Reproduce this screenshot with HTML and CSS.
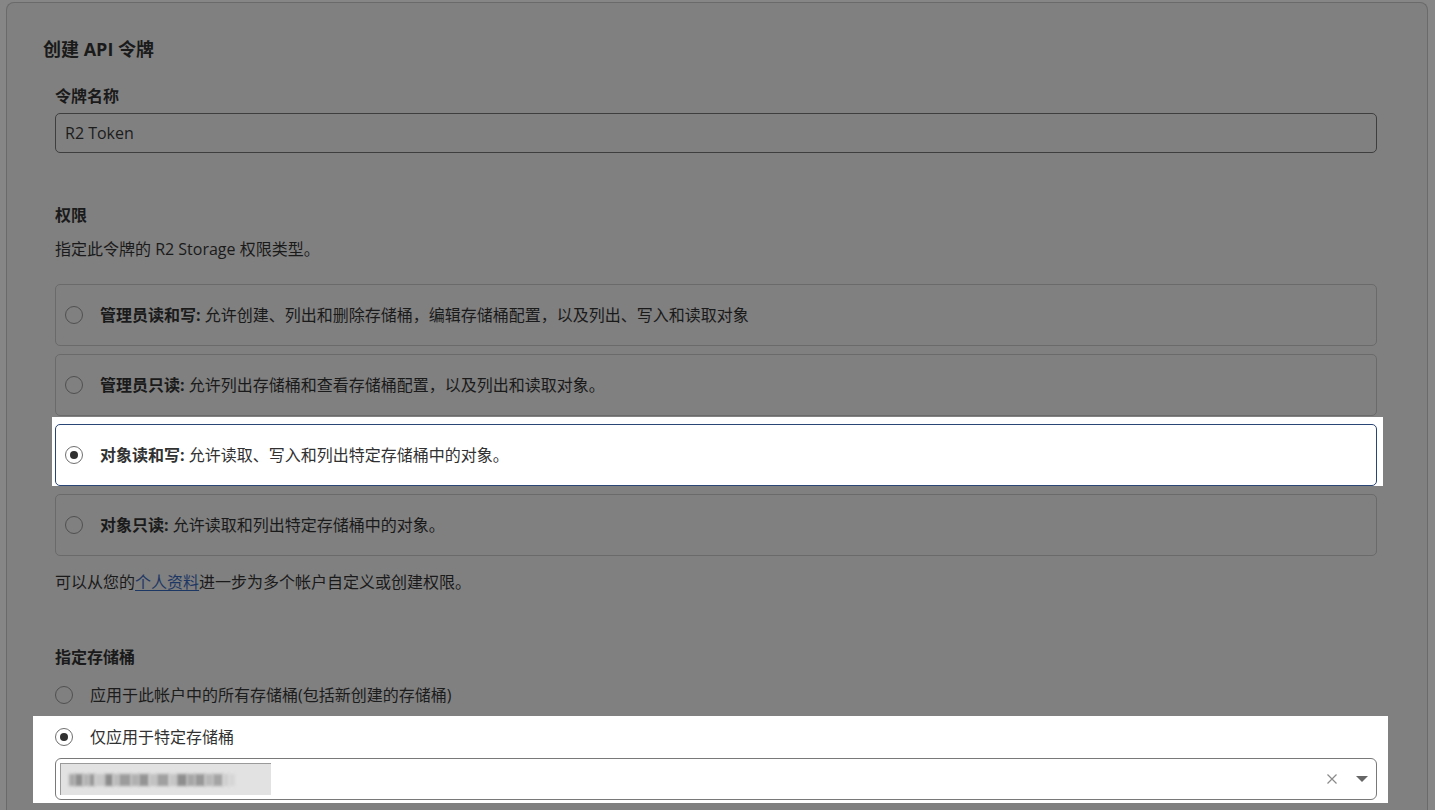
FILE: index.html
```html
<!DOCTYPE html>
<html lang="zh-CN">
<head>
  <meta charset="UTF-8" />
  <title>创建 API 令牌</title>
  <link rel="stylesheet" href="styles.css">
</head>
<body>
  <div class="page">
    <div class="card">
      <h1>创建 API 令牌</h1>

      <!-- Token name -->
      <div class="label">令牌名称</div>
      <div class="input">R2 Token</div>

      <!-- Permissions -->
      <div class="label section">权限</div>
      <p class="desc">指定此令牌的 R2 Storage 权限类型。</p>

      <div class="options">
        <div class="option">
          <span class="radio"></span>
          <span><b>管理员读和写:</b> 允许创建、列出和删除存储桶，编辑存储桶配置，以及列出、写入和读取对象</span>
        </div>
        <div class="option">
          <span class="radio"></span>
          <span><b>管理员只读:</b> 允许列出存储桶和查看存储桶配置，以及列出和读取对象。</span>
        </div>
        <div class="spot spot-option">
          <div class="option selected">
            <span class="radio checked"></span>
            <span><b>对象读和写:</b> 允许读取、写入和列出特定存储桶中的对象。</span>
          </div>
        </div>
        <div class="option">
          <span class="radio"></span>
          <span><b>对象只读:</b> 允许读取和列出特定存储桶中的对象。</span>
        </div>
      </div>

      <p class="note">可以从您的<a href="#">个人资料</a>进一步为多个帐户自定义或创建权限。</p>

      <!-- Buckets -->
      <div class="label section2">指定存储桶</div>
      <div class="choice">
        <span class="radio"></span>
        <span>应用于此帐户中的所有存储桶(包括新创建的存储桶)</span>
      </div>

      <div class="spot spot-bucket">
        <div class="choice">
          <span class="radio checked"></span>
          <span>仅应用于特定存储桶</span>
        </div>
        <div class="select">
          <!-- bucket name is pixelated in the original -->
          <div class="tag">
            <i style="width:6px;background:#a9a9a9"></i>
            <i style="width:8px;background:#8f8f8f"></i>
            <i style="width:6px;background:#b4b4b4"></i>
            <i style="width:6px;background:#9a9a9a"></i>
            <i style="width:10px;background:#c8c8c8"></i>
            <i style="width:8px;background:#8c8c8c"></i>
            <i style="width:6px;background:#bcbcbc"></i>
            <i style="width:12px;background:#9c9c9c"></i>
            <i style="width:8px;background:#b0b0b0"></i>
            <i style="width:10px;background:#949494"></i>
            <i style="width:8px;background:#c2c2c2"></i>
            <i style="width:12px;background:#a0a0a0"></i>
            <i style="width:8px;background:#c6c6c6"></i>
            <i style="width:10px;background:#8e8e8e"></i>
            <i style="width:8px;background:#a6a6a6"></i>
            <i style="width:10px;background:#989898"></i>
            <i style="width:8px;background:#b8b8b8"></i>
            <i style="width:10px;background:#a4a4a4"></i>
            <i style="width:6px;background:#d0d0d0"></i>
            <i style="width:6px;background:#d6d6d6"></i>
          </div>
          <span class="clear">
            <svg width="12" height="12" viewBox="0 0 12 12"><path d="M1.5 1.5 L10.5 10.5 M10.5 1.5 L1.5 10.5" stroke="#8a8a8a" stroke-width="1.2" fill="none"/></svg>
          </span>
          <span class="caret">
            <svg width="12" height="6" viewBox="0 0 12 6"><path d="M0 0 L12 0 L6 6 Z" fill="#666"/></svg>
          </span>
        </div>
      </div>
    </div>
  </div>
</body>
</html>
```

FILE: styles.css
```css
/* Base */
* {
  margin: 0;
  padding: 0;
  box-sizing: border-box;
}

body {
  font-family: "Open Sans", "Noto Sans CJK SC", sans-serif;
  font-size: 16px;
  line-height: 24px;
  color: #1a1a1a;
  background-color: #868686;
  overflow: hidden;
}

.page {
  padding: 2px 7px 0 6px;
  height: 810px;
}

/* Card, dimmed by the tour overlay */
.card {
  background-color: #808080;
  border: 1px solid #6a6a6a;
  border-bottom: none;
  border-radius: 8px 8px 0 0;
  padding: 32px 50px 0 48px;
  height: 100%;
}

h1 {
  font-size: 18px;
  line-height: 28px;
  font-weight: bold;
  margin-left: -12px;
  margin-bottom: 21px;
}

.label {
  font-weight: bold;
  margin-bottom: 5px;
}

.label.section {
  margin-top: 50px;
  margin-bottom: 10px;
}

.label.section2 {
  margin-top: 51px;
  margin-bottom: 14px;
}

.input {
  height: 40px;
  border: 1px solid #3e3e3e;
  border-radius: 5px;
  padding: 7px 9px;
  color: #1c1c1c;
}

.desc {
  margin-bottom: 23px;
}

/* Permission options */
.options {
  display: flex;
  flex-direction: column;
  gap: 8px;
}

.option {
  height: 62px;
  border: 1px solid #6a6a6a;
  border-radius: 5px;
  display: flex;
  align-items: center;
  gap: 17px;
  padding-left: 9px;
}

.option b {
  font-weight: bold;
}

.option.selected {
  border-color: #2a4677;
  background-color: #fff;
  color: #313131;
}

.radio {
  width: 18px;
  height: 18px;
  border-radius: 50%;
  border: 1px solid #505050;
  flex-shrink: 0;
  position: relative;
}

.spot .radio {
  border-color: #6f6f6f;
}

.radio.checked::after {
  content: "";
  position: absolute;
  left: 4px;
  top: 4px;
  width: 8px;
  height: 8px;
  border-radius: 50%;
  background-color: #313131;
}

/* Highlighted (un-dimmed) parts */
.spot {
  background-color: #fff;
  color: #313131;
}

.spot-option {
  margin: -7px -6px 0 -3px;
  padding: 7px 6px 0 3px;
}

.spot-bucket {
  margin: 9px -11px 0 -22px;
  padding: 9px 11px 3px 22px;
}

.note {
  margin-top: 14px;
}

.note a {
  color: #1d3764;
  text-decoration: underline;
  text-underline-offset: 2px;
}

.choice {
  display: flex;
  align-items: center;
  gap: 17px;
  color: #1c1c1c;
}

.spot .choice {
  color: #313131;
}

/* Bucket select */
.select {
  margin-top: 9px;
  height: 42px;
  border: 1px solid #797979;
  border-radius: 6px;
  display: flex;
  align-items: center;
  padding: 0 8px 0 4px;
}

.tag {
  width: 211px;
  height: 32px;
  background-color: #e2e2e2;
  border-top: 1px solid #9a9a9a;
  border-left: 1px solid #9a9a9a;
  display: flex;
  align-items: center;
  padding-left: 8px;
}

.tag i {
  display: block;
  height: 12px;
  filter: blur(1.5px);
}

.clear {
  margin-left: auto;
  display: flex;
  margin-right: 18px;
}

.caret {
  display: flex;
}
```
